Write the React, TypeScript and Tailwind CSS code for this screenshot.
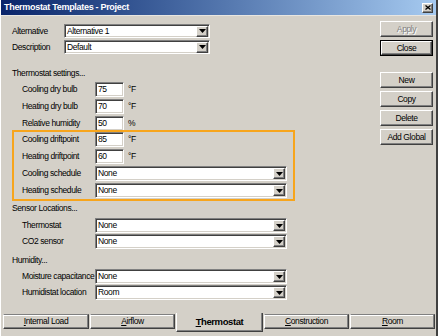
import type { ReactNode } from 'react';

const sunken =
    'border border-t-[#808080] border-l-[#808080] border-b-white border-r-white shadow-[inset_1px_1px_0_#404040,inset_-1px_-1px_0_#d4d0c8] bg-white';
const raised =
    'border border-t-white border-l-white border-b-[#404040] border-r-[#404040] shadow-[inset_-1px_-1px_0_#808080] bg-[#d4d0c8]';

function Arrow() {
    return (
        <svg width="7" height="4" viewBox="0 0 7 4">
            <path d="M0 0h7L3.5 4z" fill="#000" />
        </svg>
    );
}

function Combo({ value, w, h = 'h-[15px]' }: { value: string; w: string; h?: string }) {
    return (
        <div className={`${sunken} ${w} ${h} flex items-center pl-[2px] pr-[1px]`}>
            <span className="flex-1 leading-none whitespace-nowrap">{value}</span>
            <div className={`${raised} w-[12px] h-[11px] flex items-center justify-center`}>
                <Arrow />
            </div>
        </div>
    );
}

function Field({ value }: { value: string }) {
    return (
        <div className={`${sunken} w-[29px] h-[15px] flex items-center pl-[2px] leading-none`}>{value}</div>
    );
}

function Row({ label, children }: { label: string; children: ReactNode }) {
    return (
        <div className="flex items-center h-[15px]">
            <span className="w-[73px] whitespace-nowrap leading-none">{label}</span>
            {children}
        </div>
    );
}

function NumRow({ label, value, unit }: { label: string; value: string; unit: string }) {
    return (
        <Row label={label}>
            <Field value={value} />
            <span className="ml-[4px] leading-none">{unit}</span>
        </Row>
    );
}

function Btn({ label, disabled, def }: { label: string; disabled?: boolean; def?: boolean }) {
    const inner = (
        <div
            className={`${raised} flex-1 h-full flex items-center justify-center leading-none ${
                disabled ? 'text-[#808080] [text-shadow:1px_1px_0_#fff]' : 'text-black'
            }`}
        >
            {label}
        </div>
    );
    if (def) {
        return <div className="h-[16px] w-[53px] flex border border-black">{inner}</div>;
    }
    return <div className="h-[16px] w-[53px] flex">{inner}</div>;
}

function Tab({ first, rest, w, active }: { first: string; rest: string; w: string; active?: boolean }) {
    if (active) {
        return (
            <div
                className={`${w} h-[19px] flex items-center justify-center font-bold text-[9.5px] border-l border-l-white border-r border-r-[#404040] border-b border-b-[#404040] shadow-[inset_-1px_-1px_0_#808080]`}
            >
                <span className="underline">{first}</span>
                {rest}
            </div>
        );
    }
    return (
        <div
            className={`${w} mt-px h-[15px] flex items-center justify-center border-t border-t-[#808080] border-l border-l-white border-r border-r-[#404040] border-b border-b-[#404040] shadow-[inset_-1px_-1px_0_#808080,inset_0_1px_0_#fff]`}
        >
            <span className="underline">{first}</span>
            {rest}
        </div>
    );
}

export default function App() {
    return (
        <div className="w-[438px] h-[336px] bg-[#d4d0c8] flex flex-col text-[8.5px] tracking-[-0.4px] text-black font-['Liberation_Sans',Arial,sans-serif] border-l border-l-white border-r-2 border-r-[#404040] overflow-hidden">
            {/* title bar */}
            <div className="h-[15px] flex items-center justify-between bg-gradient-to-r from-[#0a246a] to-[#a6caf0] pl-[3px] pr-[3px] shrink-0">
                <span className="text-white font-bold text-[9px] tracking-[-0.3px] leading-none">Thermostat Templates - Project</span>
                <div className={`${raised} w-[11px] h-[10px] flex items-center justify-center`}>
                    <svg width="6" height="5" viewBox="0 0 6 5">
                        <path d="M0.5 0.5l5 4M5.5 0.5l-5 4" stroke="#000" strokeWidth="1.3" />
                    </svg>
                </div>
            </div>
            <div className="h-px bg-[#e8e6e1] shrink-0" />

            <div className="flex flex-1">
                {/* form */}
                <div className="flex-1 pl-[11px] pt-[8px] flex flex-col">
                    <div className="flex items-center h-[14px]">
                        <span className="w-[52px] leading-none">Alternative</span>
                        <Combo value="Alternative 1" w="w-[146px]" h="h-[14px]" />
                    </div>
                    <div className="flex items-center h-[14px] mt-[2px]">
                        <span className="w-[52px] leading-none">Description</span>
                        <Combo value="Default" w="w-[146px]" h="h-[14px]" />
                    </div>

                    <div className="mt-[12px] h-[14px] leading-[14px]">Thermostat settings...</div>
                    <div className="pl-[10px] mt-[2px] flex flex-col gap-[2px]">
                        <NumRow label="Cooling dry bulb" value="75" unit="°F" />
                        <NumRow label="Heating dry bulb" value="70" unit="°F" />
                        <NumRow label="Relative humidity" value="50" unit="%" />
                    </div>

                    <div className="-mt-px w-[283px] border-2 border-[#f7a51c] pl-[8px] pb-px flex flex-col gap-[2px]">
                        <NumRow label="Cooling driftpoint" value="85" unit="°F" />
                        <NumRow label="Heating driftpoint" value="60" unit="°F" />
                        <Row label="Cooling schedule">
                            <Combo value="None" w="w-[192px]" />
                        </Row>
                        <Row label="Heating schedule">
                            <Combo value="None" w="w-[192px]" />
                        </Row>
                    </div>

                    <div className="h-[14px] leading-[14px]">Sensor Locations...</div>
                    <div className="pl-[10px] mt-[3px] flex flex-col gap-px">
                        <Row label="Thermostat">
                            <Combo value="None" w="w-[192px]" />
                        </Row>
                        <Row label="CO2 sensor">
                            <Combo value="None" w="w-[192px]" />
                        </Row>
                    </div>

                    <div className="mt-[4px] h-[14px] leading-[14px]">Humidity...</div>
                    <div className="pl-[10px] mt-[2px] flex flex-col gap-px">
                        <Row label="Moisture capacitance">
                            <Combo value="None" w="w-[192px]" />
                        </Row>
                        <Row label="Humidistat location">
                            <Combo value="Room" w="w-[192px]" />
                        </Row>
                    </div>
                </div>

                {/* buttons */}
                <div className="w-[53px] mr-[3px] pt-[5px] flex flex-col">
                    <Btn label="Apply" disabled />
                    <div className="mt-[3px]">
                        <Btn label="Close" def />
                    </div>
                    <div className="mt-[16px] flex flex-col gap-[3px]">
                        <Btn label="New" />
                        <Btn label="Copy" />
                        <Btn label="Delete" />
                        <Btn label="Add Global" />
                    </div>
                </div>
            </div>

            {/* tabs */}
            <div className="h-[23px] shrink-0 flex items-start pl-[2px] gap-px">
                <Tab first="I" rest="nternal Load" w="w-[86px]" />
                <Tab first="A" rest="irflow" w="w-[85px]" />
                <Tab first="T" rest="hermostat" w="w-[87px]" active />
                <Tab first="C" rest="onstruction" w="w-[85px]" />
                <Tab first="R" rest="oom" w="w-[85px]" />
            </div>
        </div>
    );
}
